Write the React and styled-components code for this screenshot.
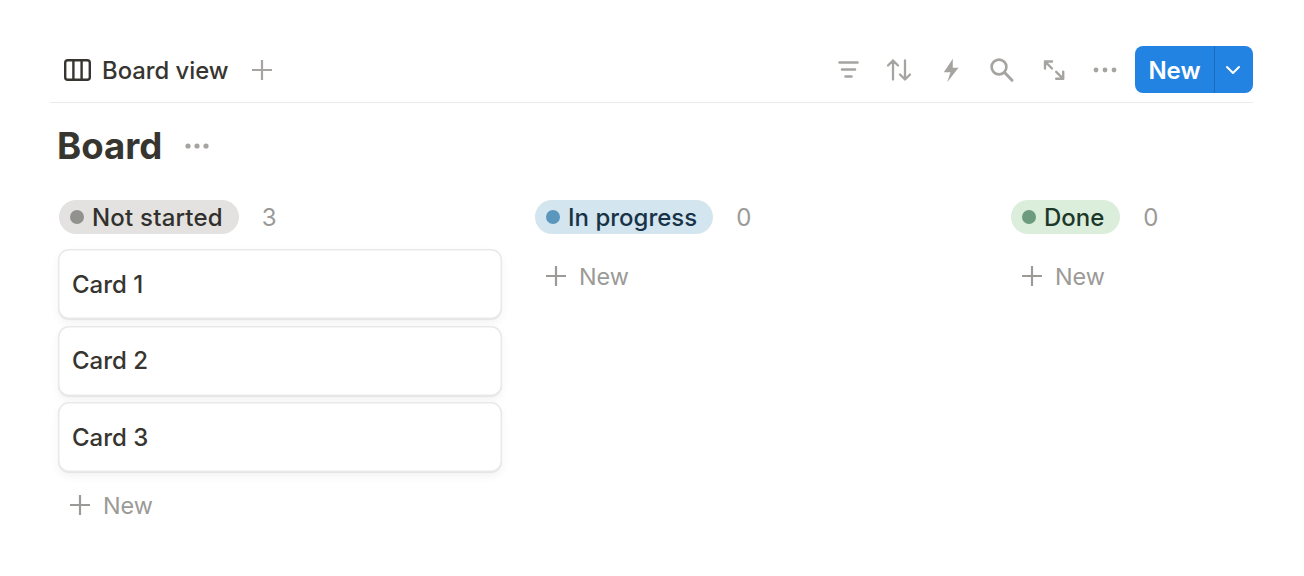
import styled, { createGlobalStyle } from 'styled-components';

const GlobalStyle = createGlobalStyle`
    html, body {
        margin: 0;
        background: #fff;
        font-family: Inter, "Liberation Sans", sans-serif;
    }
`

const columns = [
    { name: "Not started", bg: "#e3e2e0", dot: "#91918e", color: "#32302c", tracking: 0.2, cards: ["Card 1", "Card 2", "Card 3"] },
    { name: "In progress", bg: "#d3e5ef", dot: "#5b97bd", color: "#183347", tracking: 0, cards: [] },
    { name: "Done", bg: "#dbeddb", dot: "#6c9b7d", color: "#1c3829", tracking: 0, cards: [] },
];

const IconSvg = ({ width = 2.6, children }) => (
    <svg width="28" height="28" viewBox="0 0 28 28" fill="none" stroke="currentColor" strokeWidth={width} strokeLinecap="round" strokeLinejoin="round">
        {children}
    </svg>
);

const PlusIcon = () => (
    <svg width="24" height="24" viewBox="0 0 24 24" fill="none" stroke="currentColor" strokeWidth="2.2">
        <path d="M12 2v20M2 12h20" />
    </svg>
);

const App = () => {
    return (
        <Page>
            <GlobalStyle />
            <Toolbar>
                <ViewTab>
                    <svg width="27" height="22" viewBox="0 0 27 22" fill="none" stroke="#37352f" strokeWidth="2.4">
                        <rect x="1.2" y="1.2" width="24.6" height="19.6" rx="2.6" />
                        <path d="M9.4 1.2v19.6M17.6 1.2v19.6" />
                    </svg>
                    <TabLabel>Board view</TabLabel>
                </ViewTab>
                <AddView><PlusIcon /></AddView>
                <Actions>
                    <IconSlot>
                        <IconSvg>
                            <path d="M5.5 6.5h18M8 13.5h13M11.5 20.5h6" />
                        </IconSvg>
                    </IconSlot>
                    <IconSlot>
                        <IconSvg width={2.3}>
                            <path d="M8 23.5v-19M3 9.5l5-5 5 5M20 4.5v19M15 18.5l5 5 5-5" />
                        </IconSvg>
                    </IconSlot>
                    <IconSlot>
                        <svg width="28" height="28" viewBox="0 0 28 28" fill="currentColor">
                            <path d="M15.8 2.8 6.8 16.2h6.7L10.2 26.2 21.5 11.8h-5.7z" />
                        </svg>
                    </IconSlot>
                    <IconSlot>
                        <IconSvg>
                            <circle cx="11" cy="11" r="7.4" />
                            <path d="M16.8 16.8 24 24.2" strokeWidth="3" />
                        </IconSvg>
                    </IconSlot>
                    <IconSlot>
                        <IconSvg width={2.4}>
                            <path d="M5 12.5V5.5h7M5 5.5l7 7M23.2 15.8v7h-7M23.2 22.8l-7-7" />
                        </IconSvg>
                    </IconSlot>
                    <IconSlot>
                        <svg width="24" height="6" viewBox="0 0 24 6" fill="currentColor">
                            <circle cx="3" cy="3" r="2.4" />
                            <circle cx="12" cy="3" r="2.4" />
                            <circle cx="21" cy="3" r="2.4" />
                        </svg>
                    </IconSlot>
                    <NewButton>
                        <NewLabel>New</NewLabel>
                        <NewCaret>
                            <svg width="16" height="10" viewBox="0 0 16 10" fill="none" stroke="#fff" strokeWidth="2" strokeLinecap="round" strokeLinejoin="round">
                                <path d="M2 2l6 6 6-6" />
                            </svg>
                        </NewCaret>
                    </NewButton>
                </Actions>
            </Toolbar>
            <TitleRow>
                <Title>Board</Title>
                <svg width="24" height="6" viewBox="0 0 24 6" fill="#a5a4a0">
                    <circle cx="3" cy="3" r="2.6" />
                    <circle cx="12" cy="3" r="2.6" />
                    <circle cx="21" cy="3" r="2.6" />
                </svg>
            </TitleRow>
            <Board>
                {columns.map((column) => (
                    <Column key={column.name}>
                        <ColumnHeader>
                            <Pill $bg={column.bg} $color={column.color} $tracking={column.tracking}>
                                <Dot $color={column.dot} />
                                {column.name}
                            </Pill>
                            <Count>{column.cards.length}</Count>
                        </ColumnHeader>
                        <Cards>
                            {column.cards.map((card) => (
                                <Card key={card}>{card}</Card>
                            ))}
                        </Cards>
                        <AddCard>
                            <PlusIcon />
                            New
                        </AddCard>
                    </Column>
                ))}
            </Board>
        </Page>
    );
};

const Page = styled.div`
    width: 1304px;
    height: 576px;
    box-sizing: border-box;
    padding: 46px 51px 0 50px;
    overflow: hidden;
    color: #37352f;
`

const Toolbar = styled.div`
    display: flex;
    align-items: center;
    height: 47px;
    padding-bottom: 9px;
    border-bottom: 1.5px solid #ebebea;
`

const ViewTab = styled.div`
    display: flex;
    align-items: center;
    gap: 11px;
    margin-left: 14px;
    color: #37352f;
`

const TabLabel = styled.span`
    padding-top: 2px;
    font-size: 23.8px;
    font-weight: 500;
`

const AddView = styled.div`
    display: flex;
    margin-left: 21px;
    color: #a5a4a0;
`

const Actions = styled.div`
    display: flex;
    align-items: center;
    margin-left: auto;
    color: #a5a4a0;
`

const IconSlot = styled.div`
    display: flex;
    align-items: center;
    justify-content: center;
    width: 28px;
    height: 28px;
    margin-right: 23.5px;

    &:nth-child(6) {
        margin-right: 16px;
    }
`

const NewButton = styled.div`
    display: flex;
    width: 118px;
    height: 47px;
    border-radius: 8px;
    overflow: hidden;
    background: #2383e2;
    color: #fff;
`

const NewLabel = styled.div`
    display: flex;
    align-items: center;
    justify-content: center;
    box-sizing: border-box;
    width: 80px;
    padding-top: 2px;
    font-size: 24px;
    font-weight: 600;
    border-right: 1.5px solid #1b6cbc;
`

const NewCaret = styled.div`
    display: flex;
    flex: 1;
    align-items: center;
    justify-content: center;
    padding-right: 2px;
`

const TitleRow = styled.div`
    display: flex;
    align-items: center;
    gap: 23px;
    height: 48px;
    margin: 19px 0 0 7px;
`

const Title = styled.h1`
    margin: 0;
    font-size: 36.6px;
    font-weight: 700;
    color: #37352f;
`

const Board = styled.div`
    display: grid;
    grid-template-columns: repeat(3, 444px);
    gap: 32px;
    margin: 30px 0 0 8px;
`

const Column = styled.div`
    display: flex;
    flex-direction: column;
`

const ColumnHeader = styled.div`
    display: flex;
    align-items: center;
    gap: 23px;
    height: 34px;
    margin-left: 1px;
`

const Pill = styled.div`
    display: flex;
    align-items: center;
    gap: 8px;
    height: 34px;
    padding: 0 16px 0 11px;
    border-radius: 17px;
    background: ${(props) => props.$bg};
    color: ${(props) => props.$color};
    font-size: 24px;
    font-weight: 500;
    letter-spacing: ${(props) => props.$tracking}px;
`

const Dot = styled.span`
    width: 14px;
    height: 14px;
    border-radius: 50%;
    background: ${(props) => props.$color};
`

const Count = styled.span`
    font-size: 24px;
    color: #9b9a97;
`

const Cards = styled.div`
    display: flex;
    flex-direction: column;
    gap: 6.5px;
    margin-top: 15px;
    &:empty {
        margin-top: 9px;
    }
`

const Card = styled.div`
    display: flex;
    align-items: center;
    box-sizing: border-box;
    height: 70px;
    padding-left: 14px;
    border-radius: 11px;
    background: #fff;
    box-shadow: inset 0 0 0 1.5px rgba(15, 15, 15, 0.09), 0 1px 1px rgba(15, 15, 15, 0.07), 0 4px 10px rgba(15, 15, 15, 0.05);
    font-size: 24px;
    font-weight: 500;
    color: #37352f;
`

const AddCard = styled.div`
    display: flex;
    align-items: center;
    gap: 11px;
    height: 50px;
    padding-left: 10px;
    margin-top: 8px;
    font-size: 23.4px;
    color: #9b9a97;
`

export default App;
